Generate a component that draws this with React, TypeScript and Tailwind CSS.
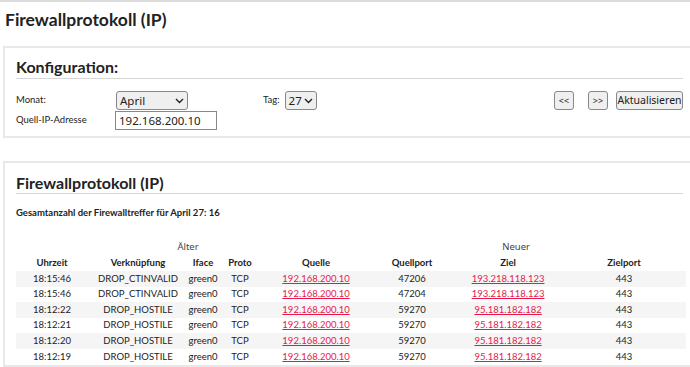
import React from "react";

const rows = [
  ["18:15:46", "DROP_CTINVALID", "green0", "TCP", "192.168.200.10", "47206", "193.218.118.123", "443"],
  ["18:15:46", "DROP_CTINVALID", "green0", "TCP", "192.168.200.10", "47204", "193.218.118.123", "443"],
  ["18:12:22", "DROP_HOSTILE", "green0", "TCP", "192.168.200.10", "59270", "95.181.182.182", "443"],
  ["18:12:21", "DROP_HOSTILE", "green0", "TCP", "192.168.200.10", "59270", "95.181.182.182", "443"],
  ["18:12:20", "DROP_HOSTILE", "green0", "TCP", "192.168.200.10", "59270", "95.181.182.182", "443"],
  ["18:12:19", "DROP_HOSTILE", "green0", "TCP", "192.168.200.10", "59270", "95.181.182.182", "443"],
];

const Chevron = () => (
  <svg width="9" height="6" viewBox="0 0 9 6" className="ml-auto">
    <path d="M1 1 L4.5 4.5 L8 1" stroke="#222" strokeWidth="1.4" fill="none" />
  </svg>
);

export default function App() {
  const font = { fontFamily: "Lato, 'Noto Sans', sans-serif" };
  const ctrl = { fontFamily: "'Noto Sans', 'Open Sans', sans-serif" };
  return (
    <div className="w-[690px] h-[367px] overflow-hidden bg-white text-[#222]" style={font}>
      <div className="border-t-2 border-[#dcdcdc]" />
      <h1 className="pl-[5px] pt-[7px] text-[17.5px] font-bold leading-[22px] text-[#222]">Firewallprotokoll (IP)</h1>

      <div className="ml-[3px] mt-[15px] w-[720px] border-2 border-[#e8e8e8] pl-[11px] pr-[40px] pb-[6px]">
        <h2 className="w-[667px] border-b border-[#d6d6d6] pt-[9px] pb-[2px] text-[16px] font-bold leading-[19px]">Konfiguration:</h2>
        <div className="mt-[12px] flex w-[667px] items-center h-[19px] text-[9.5px]">
          <span className="w-[100px]">Monat:</span>
          <div className="flex h-[19px] w-[72px] items-center rounded-[3px] border border-[#888] bg-[#efefef] px-[3px] text-[11.5px]" style={ctrl}>
            April
            <Chevron />
          </div>
          <span className="ml-[75px] mr-[5px]">Tag:</span>
          <div className="flex h-[19px] w-[32px] items-center rounded-[3px] border border-[#888] bg-[#efefef] px-[3px] text-[11.5px]" style={ctrl}>
            27
            <Chevron />
          </div>
          <div className="ml-auto flex items-center" style={ctrl}>
            <button className="h-[19px] w-[20px] rounded-[3px] border border-[#888] bg-[#efefef] text-[9px] leading-none">&lt;&lt;</button>
            <button className="ml-[14px] h-[19px] w-[20px] rounded-[3px] border border-[#888] bg-[#efefef] text-[9px] leading-none">&gt;&gt;</button>
            <button className="ml-[8px] h-[19px] w-[67px] rounded-[3px] border border-[#888] bg-[#efefef] text-[10.5px] leading-none">Aktualisieren</button>
          </div>
        </div>
        <div className="mt-[1px] flex items-center h-[19px] text-[9.5px]">
          <span className="w-[99px]">Quell-IP-Adresse</span>
          <div className="flex h-[19px] w-[102px] items-center border border-[#888] bg-white px-[3px] text-[11.5px]" style={ctrl}>
            192.168.200.10
          </div>
        </div>
      </div>

      <div className="ml-[3px] mt-[23px] w-[720px] border-2 border-[#e8e8e8] pl-[11px] pr-[40px]">
        <h2 className="w-[667px] border-b border-[#d6d6d6] pt-[10px] pb-[1px] text-[16px] font-bold leading-[19px]">Firewallprotokoll (IP)</h2>
        <p className="mt-[13px] text-[9.5px] font-bold leading-[12px]">Gesamtanzahl der Firewalltreffer für April 27: 16</p>
        <table className="mt-[20px] w-[670px] text-[9.5px] table-fixed">
          <colgroup>
            <col className="w-[72px]" />
            <col className="w-[100px]" />
            <col className="w-[30px]" />
            <col className="w-[44px]" />
            <col className="w-[108px]" />
            <col className="w-[84px]" />
            <col className="w-[108px]" />
            <col className="w-[124px]" />
          </colgroup>
          <thead>
            <tr className="h-[16px]">
              <td colSpan={5} className="text-center text-[#444] text-[9.5px]" style={ctrl}>
                <span className="relative left-[-5px]">Älter</span>
              </td>
              <td colSpan={3} className="text-center text-[#444] text-[9.5px]" style={ctrl}>
                <span className="relative left-[-12px]">Neuer</span>
              </td>
            </tr>
            <tr className="h-[16px] font-bold">
              <th className="text-center">Uhrzeit</th>
              <th className="text-center">Verknüpfung</th>
              <th className="text-center">Iface</th>
              <th className="text-center">Proto</th>
              <th className="text-center">Quelle</th>
              <th className="text-center">Quellport</th>
              <th className="text-center">Ziel</th>
              <th className="text-center">Zielport</th>
            </tr>
          </thead>
          <tbody>
            {rows.map((r, i) => (
              <tr key={i} className={i % 2 === 0 ? "h-[15.6px] bg-[#f5f5f5]" : "h-[15.6px] bg-white"}>
                <td className="text-center">{r[0]}</td>
                <td className="text-center">{r[1]}</td>
                <td className="text-center">{r[2]}</td>
                <td className="text-center">{r[3]}</td>
                <td className="text-center"><a className="text-[#e5194b] underline">{r[4]}</a></td>
                <td className="text-center">{r[5]}</td>
                <td className="text-center"><a className="text-[#e5194b] underline">{r[6]}</a></td>
                <td className="text-center">{r[7]}</td>
              </tr>
            ))}
          </tbody>
        </table>
      </div>
    </div>
  );
}
